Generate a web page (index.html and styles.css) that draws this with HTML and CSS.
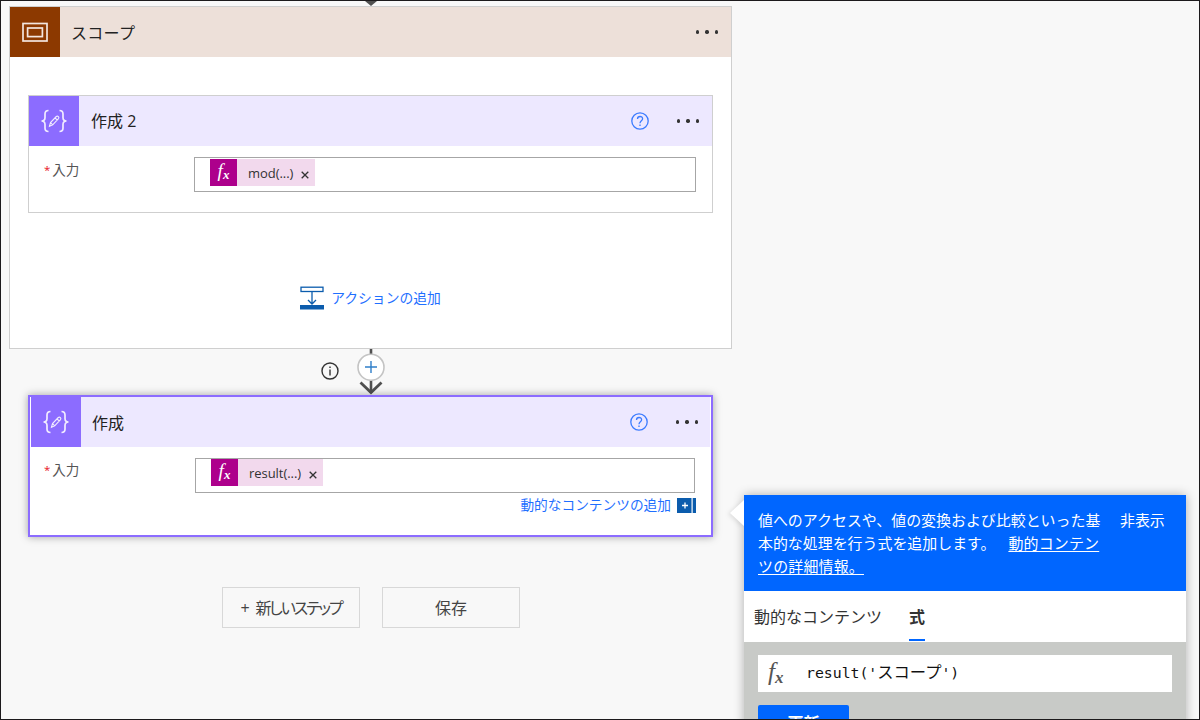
FILE: index.html
```html
<!DOCTYPE html>
<html lang="ja">

<head>
    <meta charset="UTF-8">
    <meta name="viewport" content="width=device-width, initial-scale=1.0">
    <title>フローの編集</title>
    <link rel="stylesheet" href="styles.css">
</head>

<body>
    <div class="designer">
        <div class="flow">
            <svg class="arrow-top" width="12" height="5" viewBox="0 0 12 5">
                <path d="M0 0H12L6 5Z" fill="#505050" />
            </svg>

            <div class="scope">
                <div class="card-header scope-header">
                    <div class="icon scope-icon">
                        <svg width="26" height="20" viewBox="0 0 26 20" fill="none" stroke="#f3e6de" stroke-width="1.7">
                            <rect x="1" y="1.5" width="24" height="17.5" />
                            <rect x="5.6" y="6" width="14.8" height="8.6" />
                        </svg>
                    </div>
                    <div class="title">スコープ</div>
                    <div class="more"><i></i><i></i><i></i></div>
                </div>

                <div class="card">
                    <div class="card-header">
                        <div class="icon">
                            <svg width="28" height="24" viewBox="0 0 28 24" fill="none" stroke="#f1ecff" stroke-width="1.7">
                                <path d="M8.5 1.5C5.5 1.5 5 3 5 5V8.5C5 10.5 4 12 1.5 12C4 12 5 13.5 5 15.5V19C5 21 5.5 22.5 8.5 22.5" />
                                <path d="M19.5 1.5C22.5 1.5 23 3 23 5V8.5C23 10.5 24 12 26.5 12C24 12 23 13.5 23 15.5V19C23 21 22.5 22.5 19.5 22.5" />
                                <path d="M9.5 17.2L10.5 13.6L16.3 7.5C17.8 6.3 19.6 8.2 18.5 9.6L12.7 15.9ZM15 8.9L17.2 11M10.5 13.6L12.7 15.9" stroke-width="1.1" />
                            </svg>
                        </div>
                        <div class="title">作成 2</div>
                        <svg class="help" width="18" height="18" viewBox="0 0 18 18" fill="none" stroke="#3b7bff" stroke-width="1.3">
                            <circle cx="9" cy="9" r="8.2" />
                            <path d="M6.5 7C6.5 3.7 11.6 3.7 11.6 6.8C11.6 8.8 9 8.8 9 11.2M9 12.6V14" />
                        </svg>
                        <div class="more"><i></i><i></i><i></i></div>
                    </div>
                    <div class="field">
                        <div class="label"><span class="required">*</span>入力</div>
                        <div class="input">
                            <div class="token">
                                <div class="fx"><em>f<small>x</small></em></div>
                                <span>mod(...)</span>
                                <svg class="close" width="8" height="8" viewBox="0 0 8 8" stroke="#333" stroke-width="1.3">
                                    <path d="M.7 .7L7.3 7.3M7.3 .7L.7 7.3" />
                                </svg>
                            </div>
                        </div>
                    </div>
                </div>

                <div class="add-action">
                    <svg width="24" height="24" viewBox="0 0 24 24" fill="none" stroke="#0b5cad" stroke-width="1.3">
                        <rect x="1" y="1.2" width="22" height="4.3" />
                        <path d="M12 6V18M8 14L12 18L16 14" />
                        <rect x="0" y="19" width="24" height="4.5" fill="#0b5cad" stroke="none" />
                    </svg>
                    <span>アクションの追加</span>
                </div>
            </div>

            <div class="connector">
                <svg class="info" width="18" height="18" viewBox="0 0 18 18" fill="none" stroke="#333" stroke-width="1.4">
                    <circle cx="9" cy="9" r="8" />
                    <path d="M9 7.5V13.5M9 4.5V6" />
                </svg>
                <svg class="line" width="28" height="46" viewBox="0 0 28 46" fill="none">
                    <path d="M14 0V44" stroke="#505050" stroke-width="2.6" />
                    <path d="M3.5 33.5L14 43.5L24.5 33.5" stroke="#505050" stroke-width="2.8" />
                    <circle cx="14" cy="18.3" r="13" fill="#fff" stroke="#c4c4c4" stroke-width="1.6" />
                    <path d="M14 12V24M8 18H20" stroke="#2f7fc9" stroke-width="1.4" />
                </svg>
            </div>

            <div class="card selected">
                <div class="card-header">
                    <div class="icon">
                        <svg width="28" height="24" viewBox="0 0 28 24" fill="none" stroke="#f1ecff" stroke-width="1.7">
                            <path d="M8.5 1.5C5.5 1.5 5 3 5 5V8.5C5 10.5 4 12 1.5 12C4 12 5 13.5 5 15.5V19C5 21 5.5 22.5 8.5 22.5" />
                            <path d="M19.5 1.5C22.5 1.5 23 3 23 5V8.5C23 10.5 24 12 26.5 12C24 12 23 13.5 23 15.5V19C23 21 22.5 22.5 19.5 22.5" />
                            <path d="M9.5 17.2L10.5 13.6L16.3 7.5C17.8 6.3 19.6 8.2 18.5 9.6L12.7 15.9ZM15 8.9L17.2 11M10.5 13.6L12.7 15.9" stroke-width="1.1" />
                        </svg>
                    </div>
                    <div class="title">作成</div>
                    <svg class="help" width="18" height="18" viewBox="0 0 18 18" fill="none" stroke="#3b7bff" stroke-width="1.3">
                        <circle cx="9" cy="9" r="8.2" />
                        <path d="M6.5 7C6.5 3.7 11.6 3.7 11.6 6.8C11.6 8.8 9 8.8 9 11.2M9 12.6V14" />
                    </svg>
                    <div class="more"><i></i><i></i><i></i></div>
                </div>
                <div class="field">
                    <div class="label"><span class="required">*</span>入力</div>
                    <div class="input">
                        <div class="token">
                            <div class="fx"><em>f<small>x</small></em></div>
                            <span>result(...)</span>
                            <svg class="close" width="8" height="8" viewBox="0 0 8 8" stroke="#333" stroke-width="1.3">
                                <path d="M.7 .7L7.3 7.3M7.3 .7L.7 7.3" />
                            </svg>
                        </div>
                    </div>
                </div>
                <div class="add-dynamic">
                    <span>動的なコンテンツの追加</span>
                    <svg width="19" height="15" viewBox="0 0 19 15">
                        <path d="M0 0H14.5V15H0ZM15.7 0H19V15H15.7Z" fill="#0b5cad" />
                        <path d="M8 4.5V10.5M5 7.5H11" stroke="#fff" stroke-width="1.3" />
                    </svg>
                </div>
            </div>

            <div class="buttons">
                <button class="btn new-step"><span class="plus">+</span>新しいステップ</button>
                <button class="btn">保存</button>
            </div>
        </div>

        <!-- 式の入力パネル -->
        <div class="panel">
            <div class="panel-head">
                <p>値へのアクセスや、値の変換および比較といった基<br>本的な処理を行う式を追加します。 <a class="more-link">動的コンテン<br>ツの詳細情報。</a></p>
                <div class="hide">非表示</div>
            </div>
            <div class="tabs">
                <div class="tab">動的なコンテンツ</div>
                <div class="tab active">式</div>
            </div>
            <div class="panel-body">
                <div class="expression">
                    <em class="fx-dark">f<small>x</small></em>
                    <code>result('<span>スコープ</span>')</code>
                </div>
                <button class="update">更新</button>
            </div>
        </div>
    </div>
</body>

</html>
```

FILE: styles.css
```css
* {
    box-sizing: border-box;
}

body {
    margin: 0;
    font-family: 'Open Sans', 'Noto Sans CJK JP', sans-serif;
    color: #333;
}

.designer {
    position: relative;
    width: 1200px;
    height: 720px;
    border: 1px solid #1c1a1c;
    background-color: #f8f8f8;
    overflow: hidden;
}

.flow {
    width: 723px;
    margin-left: 8px;
    display: flex;
    flex-direction: column;
}

.arrow-top {
    display: block;
    margin-left: 356px;
}

.scope {
    height: 343px;
    border: 1px solid #cfcfcf;
    background-color: #fff;
}

.card-header {
    height: 50px;
    display: flex;
    align-items: center;
    background-color: #ede8ff;
}

.scope-header {
    background-color: #ede0d9;
}

.icon {
    width: 50px;
    height: 50px;
    display: flex;
    justify-content: center;
    align-items: center;
    background-color: #8c6cff;
}

.scope-icon {
    background-color: #8c3900;
}

.title {
    flex: 1;
    padding-left: 12px;
    font-size: 16px;
    line-height: 24px;
    color: #222;
}

.scope-header .title {
    padding: 1px 0 0 11px;
    letter-spacing: 0.3px;
}

.more {
    display: flex;
    gap: 6.2px;
    margin-right: 13px;
}

.more i {
    width: 3.3px;
    height: 3.3px;
    border-radius: 50%;
    background-color: #333;
}

.help {
    margin-right: 28px;
}

.card {
    width: 685px;
    height: 118px;
    margin: 38px 0 0 18px;
    border: 1px solid #cfcfcf;
    background-color: #fff;
}

.field {
    display: flex;
    padding: 11px 16px 0;
}

.label {
    width: 149px;
    padding-top: 3px;
    font-size: 13.5px;
    line-height: 20px;
    color: #555;
}

.required {
    margin: 0 2px 0 -1px;
    font-size: 11.5px;
    vertical-align: 1px;
    color: #e81123;
}

.input {
    flex: 1;
    height: 35px;
    padding: 1px 15px;
    border: 1px solid #a6a6a6;
}

.token {
    display: inline-flex;
    align-items: center;
    height: 27px;
    padding-right: 6px;
    background-color: #f2d9ed;
    font-size: 13px;
}

.token span {
    margin: 1px 8px 0 11px;
    letter-spacing: -0.05px;
}

.close {
    margin-top: 4px;
}

.fx {
    width: 27px;
    height: 27px;
    background-color: #ad008c;
    color: #fff;
    text-align: center;
    font-family: 'Liberation Serif', serif;
    font-size: 19px;
    line-height: 24px;
}

.fx small {
    font-size: 13px;
    font-weight: bold;
    vertical-align: -2px;
    line-height: 1;
}

.add-action {
    display: flex;
    justify-content: center;
    align-items: center;
    gap: 7px;
    margin-top: 73px;
    font-size: 13.8px;
    line-height: 24px;
    color: #1f6fff;
}

.connector {
    height: 46px;
    display: flex;
    padding-left: 312px;
}

.info {
    margin: 13px 18px 0 0;
}

.selected {
    width: 685px;
    height: 142px;
    margin: 0 0 0 19px;
    border: 2px solid #8c6cff;
    padding: 0 1px;
    box-shadow: 0 0 8px rgba(0, 0, 0, 0.35);
}

.selected .title {
    padding: 1px 0 0 11px;
}

.selected .more {
    margin-right: 12px;
}

.selected .field {
    padding: 11px 15px 0 14px;
}

.selected .label {
    width: 150px;
    padding-top: 2px;
}

.selected .input {
    padding-top: 0;
}

.add-dynamic {
    display: flex;
    justify-content: flex-end;
    align-items: center;
    gap: 6px;
    padding: 1px 14px 0 0;
    font-size: 13.7px;
    line-height: 22px;
    color: #1f6fff;
}

.buttons {
    display: flex;
    gap: 22px;
    margin: 50px 0 0 213px;
}

.btn {
    width: 138px;
    height: 41px;
    padding: 0 0 2px;
    border: 1px solid #d8d8d8;
    background-color: #f8f8f8;
    font-family: inherit;
    font-size: 16px;
    color: #444;
}

.new-step {
    letter-spacing: -2.1px;
    font-feature-settings: 'palt';
}

.plus {
    margin-right: 8px;
}

/* パネル */
.panel {
    position: absolute;
    left: 743px;
    top: 494px;
    width: 442px;
    height: 240px;
    background-color: #fff;
    box-shadow: 0 0 10px rgba(0, 0, 0, 0.3);
}

.panel::before {
    content: '';
    position: absolute;
    left: -14px;
    top: 5px;
    border: 13px solid transparent;
    border-left: 0;
    border-right: 14px solid #fff;
    filter: drop-shadow(-2px 1px 2px rgba(0, 0, 0, 0.1));
}

.panel-head {
    height: 96px;
    display: flex;
    padding: 14px 14px 0;
    background-color: #06f;
    color: #fff;
    font-size: 14.95px;
    line-height: 23px;
}

.panel-head p {
    width: 362px;
    margin: 0;
    white-space: nowrap;
    word-spacing: 9px;
}

.more-link {
    letter-spacing: 0.2px;
    text-decoration: underline;
    text-underline-offset: 2px;
}

.tabs {
    height: 51px;
    display: flex;
    gap: 27px;
    padding-left: 10px;
    font-size: 16px;
    line-height: 52px;
}

.tab {
    height: 50px;
}

.active {
    border-bottom: 2px solid #06f;
    font-weight: bold;
}

.panel-body {
    height: 93px;
    padding: 13px 14px 0;
    background-color: #c8cac7;
}

.expression {
    height: 37px;
    display: flex;
    align-items: center;
    padding-left: 10px;
    background-color: #fff;
}

.fx-dark {
    width: 38px;
    padding-bottom: 3px;
    font-family: 'Liberation Serif', serif;
    font-size: 25px;
    line-height: 30px;
    color: #555;
}

.fx-dark small {
    font-size: 17px;
    font-weight: bold;
    vertical-align: -3px;
    line-height: 1;
}

code {
    padding-bottom: 6px;
    font-family: 'DejaVu Sans Mono', 'Noto Sans CJK JP', monospace;
    font-size: 14.8px;
    color: #111;
}

code span {
    font-size: 16.3px;
}

.update {
    display: block;
    width: 91px;
    height: 34px;
    margin-top: 13px;
    border: 0;
    border-radius: 2px;
    background-color: #06f;
    color: #fff;
    font-family: inherit;
    font-size: 16px;
    font-weight: bold;
}
```
